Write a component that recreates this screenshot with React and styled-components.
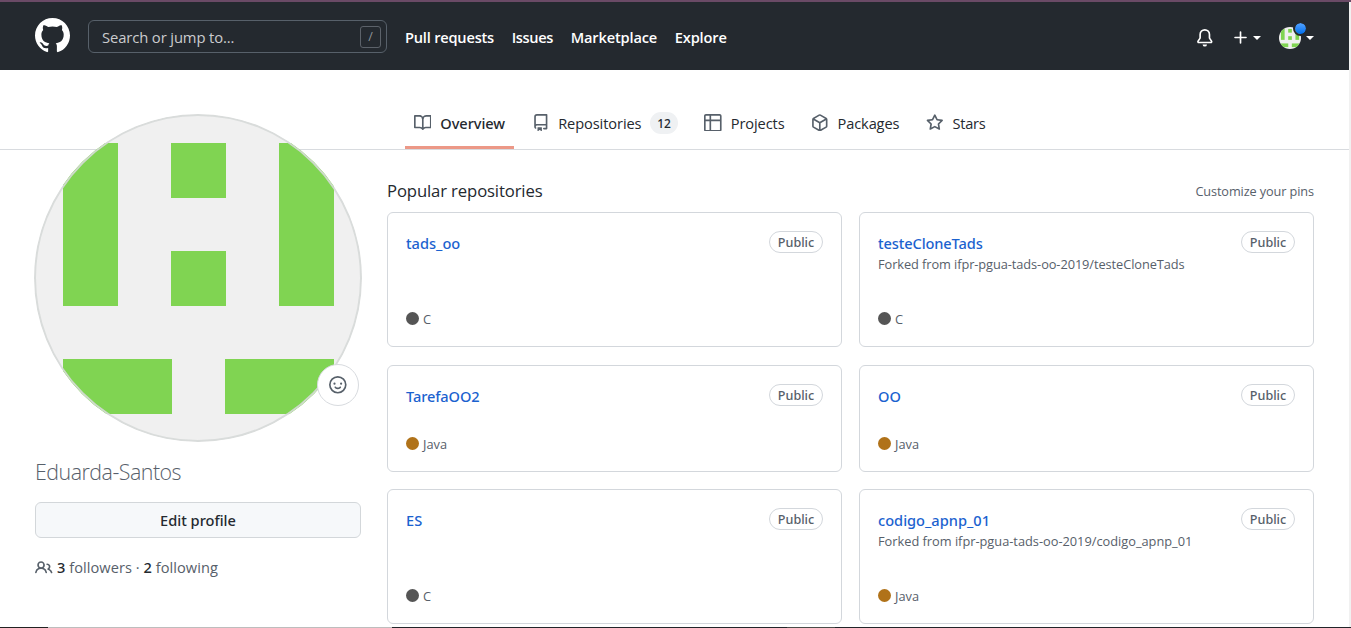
import React from "react";
import styled, { createGlobalStyle } from "styled-components";

const GlobalStyle = createGlobalStyle`
  *, *::before, *::after { box-sizing: border-box; }
  html, body, #root { height: 100%; }
  body {
    margin: 0;
    overflow: hidden;
    background: #fff;
    color: #24292f;
    font-family: "Open Sans", "Noto Sans", sans-serif;
    font-size: 14.6px;
  }
  ul { list-style: none; margin: 0; padding: 0; }
  a { color: inherit; text-decoration: none; }
`;

const paths = {
  github: "M8 0C3.58 0 0 3.58 0 8c0 3.54 2.29 6.53 5.47 7.59.4.07.55-.17.55-.38 0-.19-.01-.82-.01-1.49-2.01.37-2.53-.49-2.69-.94-.09-.23-.48-.94-.82-1.13-.28-.15-.68-.52-.01-.53.63-.01 1.08.58 1.23.82.72 1.21 1.87.87 2.33.66.07-.52.28-.87.51-1.07-1.78-.2-3.64-.89-3.64-3.95 0-.87.31-1.59.82-2.15-.08-.2-.36-1.02.08-2.12 0 0 .67-.21 2.2.82.64-.18 1.32-.27 2-.27.68 0 1.36.09 2 .27 1.53-1.04 2.2-.82 2.2-.82.44 1.1.16 1.92.08 2.12.51.56.82 1.27.82 2.15 0 3.07-1.87 3.75-3.65 3.95.29.25.54.73.54 1.48 0 1.07-.01 1.93-.01 2.2 0 .21.15.46.55.38A8.013 8.013 0 0016 8c0-4.42-3.58-8-8-8z",
  book: "M0 1.75A.75.75 0 01.75 1h4.253c1.227 0 2.317.59 3 1.501A3.744 3.744 0 0111.006 1h4.245a.75.75 0 01.75.75v10.5a.75.75 0 01-.75.75h-4.507a2.25 2.25 0 00-1.591.659l-.622.621a.75.75 0 01-1.06 0l-.622-.621A2.25 2.25 0 005.258 13H.75a.75.75 0 01-.75-.75V1.75zm8.755 3a2.25 2.25 0 012.25-2.25H14.5v9h-3.757c-.71 0-1.4.201-1.992.572l.004-7.322zm-1.504 7.324l.004-5.073-.002-2.253A2.25 2.25 0 005.003 2.5H1.5v9h3.757a3.75 3.75 0 011.994.574z",
  repo: "M2 2.5A2.5 2.5 0 014.5 0h8.75a.75.75 0 01.75.75v12.5a.75.75 0 01-.75.75h-2.5a.75.75 0 110-1.5h1.75v-2h-8a1 1 0 00-.714 1.7.75.75 0 01-1.072 1.05A2.495 2.495 0 012 11.5v-9zm10.5-1V9h-8c-.356 0-.694.074-1 .208V2.5a1 1 0 011-1h8zM5 12.25v3.25a.25.25 0 00.4.2l1.45-1.087a.25.25 0 01.3 0L8.6 15.7a.25.25 0 00.4-.2v-3.25a.25.25 0 00-.25-.25h-3.5a.25.25 0 00-.25.25z",
  table: "M0 1.75C0 .784.784 0 1.75 0h12.5C15.216 0 16 .784 16 1.75v12.5A1.75 1.75 0 0114.25 16H1.75A1.75 1.75 0 010 14.25V1.75zM1.5 6.5v7.75c0 .138.112.25.25.25H5v-8H1.5zM5 5H1.5V1.75a.25.25 0 01.25-.25H5V5zm1.5 1.5v8h7.75a.25.25 0 00.25-.25V6.5h-8zm8-1.5h-8V1.5h7.75a.25.25 0 01.25.25V5z",
  package: "M8.878.392a1.75 1.75 0 00-1.756 0l-5.25 3.045A1.75 1.75 0 001 4.951v6.098c0 .624.332 1.2.872 1.514l5.25 3.045a1.75 1.75 0 001.756 0l5.25-3.045c.54-.313.872-.89.872-1.514V4.951c0-.624-.332-1.2-.872-1.514L8.878.392zM7.875 1.69a.25.25 0 01.25 0l4.63 2.685L8 7.133 3.245 4.375l4.63-2.685zM2.5 5.677v5.372c0 .09.047.171.125.216l4.625 2.683V8.432L2.5 5.677zm6.25 8.271l4.625-2.683a.25.25 0 00.125-.216V5.677L8.75 8.432v5.516z",
  star: "M8 .25a.75.75 0 01.673.418l1.882 3.815 4.21.612a.75.75 0 01.416 1.279l-3.046 2.97.719 4.192a.75.75 0 01-1.088.791L8 12.347l-3.766 1.98a.75.75 0 01-1.088-.79l.72-4.194L.818 6.374a.75.75 0 01.416-1.28l4.21-.611L7.327.668A.75.75 0 018 .25zm0 2.445L6.615 5.5a.75.75 0 01-.564.41l-3.097.45 2.24 2.184a.75.75 0 01.216.664l-.528 3.084 2.769-1.456a.75.75 0 01.698 0l2.77 1.456-.53-3.084a.75.75 0 01.216-.664l2.24-2.183-3.096-.45a.75.75 0 01-.564-.41L8 2.694v.001z",
  bell: "M8 16a2 2 0 001.985-1.75c.017-.137-.097-.25-.235-.25h-3.5c-.138 0-.252.113-.235.25A2 2 0 008 16zM8 1.5A3.5 3.5 0 004.5 5v2.947c0 .346-.102.683-.294.97l-1.703 2.556a.018.018 0 00-.003.01l.001.006c0 .002.002.004.004.006a.017.017 0 00.006.004l.007.001h10.964l.007-.001a.016.016 0 00.006-.004.016.016 0 00.004-.006l.001-.007a.017.017 0 00-.003-.01l-1.703-2.554a1.75 1.75 0 01-.294-.97V5A3.5 3.5 0 008 1.5zM3 5a5 5 0 0110 0v2.947c0 .05.015.098.042.139l1.703 2.555A1.518 1.518 0 0113.482 13H2.518a1.518 1.518 0 01-1.263-2.36l1.703-2.554A.25.25 0 003 7.947V5z",
  plus: "M7.75 2a.75.75 0 01.75.75V7h4.25a.75.75 0 110 1.5H8.5v4.25a.75.75 0 11-1.5 0V8.5H2.75a.75.75 0 010-1.5H7V2.75A.75.75 0 017.75 2z",
  people: "M5.5 3.5a2 2 0 100 4 2 2 0 000-4zM2 5.5a3.5 3.5 0 115.898 2.549 5.507 5.507 0 013.034 4.084.75.75 0 11-1.482.235 4.001 4.001 0 00-7.9 0 .75.75 0 01-1.482-.236A5.507 5.507 0 013.102 8.05 3.49 3.49 0 012 5.5zM11 4a.75.75 0 100 1.5 1.5 1.5 0 01.666 2.844.75.75 0 00-.416.672v.352a.75.75 0 00.574.73c1.2.289 2.162 1.2 2.522 2.372a.75.75 0 101.434-.44 5.01 5.01 0 00-2.56-3.012A3 3 0 0011 4z",
  smiley: "M1.5 8a6.5 6.5 0 1113 0 6.5 6.5 0 01-13 0zM8 0a8 8 0 100 16A8 8 0 008 0zM5 8a1 1 0 100-2 1 1 0 000 2zm7-1a1 1 0 11-2 0 1 1 0 012 0zM5.32 9.636a.75.75 0 011.038.175l.007.009c.103.118.22.222.35.31.264.178.683.37 1.285.37.602 0 1.02-.192 1.285-.371.13-.088.247-.192.35-.31l.007-.008a.75.75 0 111.222.87l-.614-.431c.614.43.614.431.613.431v.001l-.001.002-.002.003-.005.007-.014.019a1.984 1.984 0 01-.184.213c-.16.166-.338.316-.53.445-.63.418-1.37.638-2.127.629-.946 0-1.652-.308-2.126-.63a3.32 3.32 0 01-.715-.657l-.014-.02-.005-.006-.002-.003v-.002h-.001l.613-.432-.614.43a.75.75 0 01.183-1.044h.001z",
};

const Svg = styled.svg`
  display: block;
  flex: none;
  fill: currentColor;
`;

function Icon({ name, size = 17.6 }) {
  return (
    <Svg width={size} height={size} viewBox="0 0 16 16" fillRule="evenodd" aria-hidden="true">
      <path d={paths[name]} />
    </Svg>
  );
}

function Identicon({ size }) {
  return (
    <Svg width={size} height={size} viewBox="0 0 328 328" aria-hidden="true">
      <g fill="#80d452">
        <rect x="29" y="29" width="55" height="163" />
        <rect x="137" y="29" width="55" height="55" />
        <rect x="137" y="137" width="55" height="55" />
        <rect x="245" y="29" width="55" height="163" />
        <rect x="29" y="245" width="109" height="55" />
        <rect x="191" y="245" width="109" height="55" />
      </g>
    </Svg>
  );
}

const Page = styled.div`
  height: 100%;
  display: flex;
  flex-direction: column;
  overflow: hidden;
  border-top: 2px solid #6a4a66;
`;

const Viewport = styled.div`
  flex: 1;
  min-height: 0;
  border-right: 2px solid #f1f1f1;
`;

const Header = styled.header`
  height: 68px;
  padding: 0 35px 2px;
  display: flex;
  align-items: center;
  background: #24292f;
  color: #fff;
`;

const Search = styled.div`
  width: 299px;
  height: 33px;
  margin: 3px 18px 0;
  padding: 0 5px 0 13px;
  display: flex;
  align-items: center;
  justify-content: space-between;
  border: 1px solid #57606a;
  border-radius: 6px;
  color: #cbccce;
  font-size: 14.8px;
  letter-spacing: -0.12px;
`;

const SlashKey = styled.kbd`
  width: 21px;
  height: 22px;
  display: flex;
  align-items: center;
  justify-content: center;
  border: 1px solid #5c626a;
  border-radius: 3px;
  color: #8f9499;
  font: 12.5px "Open Sans", sans-serif;
`;

const MainNav = styled.nav`
  display: flex;
  gap: 17.7px;
  padding-top: 3px;
  font-weight: 600;
`;

const NavLink = styled.a`
  letter-spacing: ${(p) => p.$track}px;
`;

const HeaderTools = styled.div`
  margin-left: auto;
  padding-top: 6px;
  display: flex;
  align-items: center;
`;

const AddMenu = styled.div`
  display: flex;
  align-items: center;
  gap: 3px;
  margin: 0 18.4px;
`;

const Caret = styled.span`
  border: 4.8px solid transparent;
  border-top-color: #fff;
  border-bottom-width: 0;
`;

const UserMenu = styled.div`
  position: relative;
  display: flex;
  align-items: center;
  gap: 5px;
`;

const SmallAvatar = styled.span`
  width: 22px;
  height: 22px;
  overflow: hidden;
  border-radius: 50%;
  background: #f0f0f0;
`;

const Unread = styled.i`
  position: absolute;
  left: 14px;
  top: -6px;
  width: 15px;
  height: 15px;
  border: 2px solid #24292f;
  border-radius: 50%;
  background: linear-gradient(#54a3ff, #006eed) padding-box;
`;

const TabBar = styled.nav`
  height: 80px;
  padding-left: 405px;
  display: flex;
  align-items: flex-end;
  gap: 8.9px;
  border-bottom: 1px solid #d8dbdf;
`;

const Tab = styled.a`
  height: 53px;
  padding: 3px 8.9px 0;
  display: flex;
  align-items: center;
  gap: 8.8px;
  color: #57606a;
  border-bottom: 3px solid ${(p) => (p.$active ? "#ec9887" : "transparent")};
`;

const TabLabel = styled.span`
  color: #24292f;
  letter-spacing: ${(p) => p.$track}px;
  ${(p) => p.$active && `font-family: "Noto Sans"; font-weight: 500;`}
`;

const Counter = styled.span`
  width: 27.4px;
  height: 22px;
  padding-top: 1px;
  display: flex;
  align-items: center;
  justify-content: center;
  border-radius: 11px;
  background: #eff1f3;
  color: #24292f;
  font: 500 12px "Noto Sans", sans-serif;
`;

const Columns = styled.div`
  display: flex;
  gap: 26px;
  padding: 0 35px;
`;

const Sidebar = styled.aside`
  width: 326px;
  flex: none;
`;

const AvatarBox = styled.div`
  position: relative;
  width: 328px;
  height: 328px;
  margin: -36px -1px 0;
`;

const Avatar = styled.div`
  position: relative;
  overflow: hidden;
  border-radius: 50%;
  background: #f0f0f0;
  &::after {
    content: "";
    position: absolute;
    inset: 0;
    border: 2px solid rgba(214, 217, 216, 0.9);
    border-radius: 50%;
  }
`;

const StatusButton = styled.button`
  position: absolute;
  right: 3px;
  bottom: 36px;
  width: 42px;
  height: 42px;
  padding: 0;
  display: flex;
  align-items: center;
  justify-content: center;
  border: 1px solid #d8dbdf;
  border-radius: 50%;
  background: #fff;
  color: #57606a;
`;

const UserName = styled.h1`
  margin: 15px 0 16px;
  color: #57606a;
  font-size: 21.4px;
  line-height: 29px;
  font-weight: 300;
  letter-spacing: -0.5px;
`;

const EditButton = styled.button`
  display: block;
  width: 100%;
  height: 36px;
  padding: 0;
  border: 1px solid #d3d7da;
  border-radius: 6px;
  background: #f6f8fa;
  color: #24292f;
  font: 500 14.6px "Noto Sans", sans-serif;
`;

const Follow = styled.div`
  display: flex;
  align-items: center;
  margin-top: 18px;
  line-height: 22px;
  color: #57606a;
  white-space: pre;
  letter-spacing: 0.05px;
  svg { margin: 2px 4.4px 0 0; }
  b {
    color: #24292f;
    font-family: "Noto Sans";
    font-weight: 500;
  }
`;

const Main = styled.main`
  flex: 1;
  padding-top: 29px;
`;

const SectionHead = styled.div`
  height: 33px;
  display: flex;
  justify-content: space-between;
`;

const SectionTitle = styled.h2`
  margin: 0;
  font-size: 16.7px;
  line-height: 24px;
  font-weight: 400;
  letter-spacing: -0.13px;
`;

const PinsLink = styled.a`
  color: #57606a;
  font-size: 12.7px;
  line-height: 25px;
  letter-spacing: -0.09px;
`;

const RepoGrid = styled.ul`
  display: grid;
  grid-template-columns: 455px 455px;
  grid-template-rows: 135px 107px 135px;
  gap: 18px 17px;
`;

const RepoCard = styled.li`
  padding: 18px 18px 19px;
  display: flex;
  flex-direction: column;
  justify-content: space-between;
  border: 1px solid #d3d7dc;
  border-radius: 6px;
  color: #57606a;
  font-size: 12.8px;
  &:nth-child(n + 5) { margin: -1px 0 1px; }
`;

const RepoHead = styled.div`
  display: flex;
  justify-content: space-between;
  align-items: flex-start;
`;

const RepoName = styled.a`
  display: block;
  padding-top: 1px;
  color: #1b62cf;
  font: 500 14.6px/22px "Noto Sans", sans-serif;
  letter-spacing: ${(p) => p.$track || 0}px;
`;

const ForkNote = styled.p`
  margin: 0;
  line-height: 20px;
  letter-spacing: ${(p) => p.$track}px;
`;

const Visibility = styled.span`
  width: 54px;
  height: 22px;
  display: flex;
  align-items: center;
  justify-content: center;
  border: 1px solid #d3d7dc;
  border-radius: 11px;
  font: 500 12.6px "Noto Sans", sans-serif;
`;

const Language = styled.div`
  display: flex;
  align-items: flex-start;
  gap: 4px;
  height: 18px;
  line-height: 20px;
  &::before {
    content: "";
    width: 13px;
    height: 13px;
    margin-top: 3px;
    border-radius: 50%;
    background: ${(p) => p.$color};
  }
`;

const BottomEdge = styled.div`
  position: fixed;
  left: 0;
  right: 0;
  bottom: 0;
  height: 1px;
  background: linear-gradient(to right, #222 48px, #bdbdbd 48px 392px, #222529 392px 787px, #4a4b48 787px 835px, #222529 835px);
`;

const navLinks = [
  ["Pull requests", -0.2],
  ["Issues", -0.35],
  ["Marketplace", -0.16],
  ["Explore", -0.13],
];

const tabs = [
  { icon: "book", label: "Overview", active: true, track: -0.05 },
  { icon: "repo", label: "Repositories", count: 12, track: -0.08 },
  { icon: "table", label: "Projects", track: -0.1 },
  { icon: "package", label: "Packages", track: -0.12 },
  { icon: "star", label: "Stars", track: -0.24 },
];

const languageColors = { C: "#555555", Java: "#b07219" };

const repos = [
  { name: "tads_oo", lang: "C" },
  { name: "testeCloneTads", lang: "C", fork: "ifpr-pgua-tads-oo-2019/testeCloneTads", track: -0.11, forkTrack: -0.08 },
  { name: "TarefaOO2", lang: "Java", track: -0.1 },
  { name: "OO", lang: "Java" },
  { name: "ES", lang: "C" },
  { name: "codigo_apnp_01", lang: "Java", fork: "ifpr-pgua-tads-oo-2019/codigo_apnp_01", forkTrack: -0.01 },
];

export default function App() {
  return (
    <Page>
      <GlobalStyle />
      <Viewport>
        <Header>
          <Icon name="github" size={35} />
          <Search>
            Search or jump to...
            <SlashKey>/</SlashKey>
          </Search>
          <MainNav>
            {navLinks.map(([label, track]) => (
              <NavLink key={label} $track={track}>{label}</NavLink>
            ))}
          </MainNav>
          <HeaderTools>
            <Icon name="bell" />
            <AddMenu>
              <Icon name="plus" />
              <Caret />
            </AddMenu>
            <UserMenu>
              <SmallAvatar><Identicon size={22} /></SmallAvatar>
              <Caret />
              <Unread />
            </UserMenu>
          </HeaderTools>
        </Header>

        <TabBar>
          {tabs.map((t) => (
            <Tab key={t.label} $active={t.active}>
              <Icon name={t.icon} />
              <TabLabel $active={t.active} $track={t.track}>{t.label}</TabLabel>
              {t.count && <Counter>{t.count}</Counter>}
            </Tab>
          ))}
        </TabBar>

        <Columns>
          <Sidebar>
            <AvatarBox>
              <Avatar><Identicon size={328} /></Avatar>
              <StatusButton><Icon name="smiley" /></StatusButton>
            </AvatarBox>
            <UserName>Eduarda-Santos</UserName>
            <EditButton>Edit profile</EditButton>
            <Follow>
              <Icon name="people" />
              <b>3</b> followers · <b>2</b> following
            </Follow>
          </Sidebar>

          <Main>
            <SectionHead>
              <SectionTitle>Popular repositories</SectionTitle>
              <PinsLink>Customize your pins</PinsLink>
            </SectionHead>
            <RepoGrid>
              {repos.map((r) => (
                <RepoCard key={r.name}>
                  <RepoHead>
                    <div>
                      <RepoName $track={r.track}>{r.name}</RepoName>
                      {r.fork && <ForkNote $track={r.forkTrack}>Forked from {r.fork}</ForkNote>}
                    </div>
                    <Visibility>Public</Visibility>
                  </RepoHead>
                  <Language $color={languageColors[r.lang]}>{r.lang}</Language>
                </RepoCard>
              ))}
            </RepoGrid>
          </Main>
        </Columns>
      </Viewport>
      <BottomEdge />
    </Page>
  );
}
